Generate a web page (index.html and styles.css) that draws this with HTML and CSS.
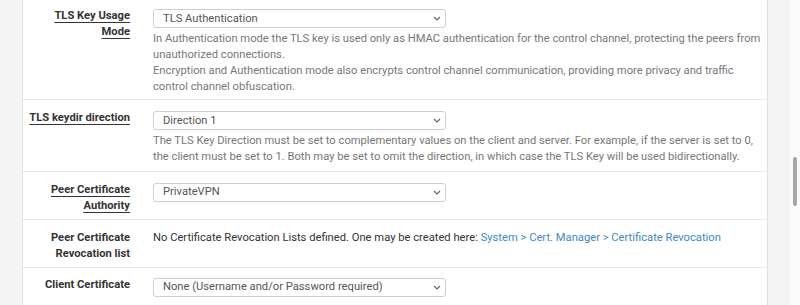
FILE: index.html
```html
<!DOCTYPE html>
<html>
<head>
<meta charset="utf-8">
<link rel="stylesheet" href="styles.css">
</head>
<body>
<div class="page">
  <div class="panel">
    <div class="row r1">
      <div class="label"><span class="req">TLS Key Usage</span><br><span class="req">Mode</span></div>
      <div class="field">
        <div class="select"><span>TLS Authentication</span><svg class="chev" width="8" height="5" viewBox="0 0 8 5"><path d="M1 1 L4 4 L7 1" fill="none" stroke="#666" stroke-width="1.2"/></svg></div>
        <div class="help">In Authentication mode the TLS key is used only as HMAC authentication for the control channel, protecting the peers from unauthorized connections.<br>Encryption and Authentication mode also encrypts control channel communication, providing more privacy and traffic control channel obfuscation.</div>
      </div>
    </div>
    <div class="row r2">
      <div class="label"><span class="req">TLS keydir direction</span></div>
      <div class="field">
        <div class="select"><span>Direction 1</span><svg class="chev" width="8" height="5" viewBox="0 0 8 5"><path d="M1 1 L4 4 L7 1" fill="none" stroke="#666" stroke-width="1.2"/></svg></div>
        <div class="help">The TLS Key Direction must be set to complementary values on the client and server. For example, if the server is set to 0, the client must be set to 1. Both may be set to omit the direction, in which case the TLS Key will be used bidirectionally.</div>
      </div>
    </div>
    <div class="row r3">
      <div class="label"><span class="req">Peer Certificate</span><br><span class="req">Authority</span></div>
      <div class="field">
        <div class="select"><span>PrivateVPN</span><svg class="chev" width="8" height="5" viewBox="0 0 8 5"><path d="M1 1 L4 4 L7 1" fill="none" stroke="#666" stroke-width="1.2"/></svg></div>
      </div>
    </div>
    <div class="row r4">
      <div class="label plain">Peer Certificate<br>Revocation list</div>
      <div class="field">
        <div class="text">No Certificate Revocation Lists defined. One may be created here: <a href="#">System &gt; Cert. Manager &gt; Certificate Revocation</a></div>
      </div>
    </div>
    <div class="row r5">
      <div class="label">Client Certificate</div>
      <div class="field">
        <div class="select"><span>None (Username and/or Password required)</span><svg class="chev" width="8" height="5" viewBox="0 0 8 5"><path d="M1 1 L4 4 L7 1" fill="none" stroke="#666" stroke-width="1.2"/></svg></div>
      </div>
    </div>
  </div>
</div>
<div class="scrollbar"><div class="thumb"></div></div>
</body>
</html>
```
FILE: styles.css
```css
html, body {
  margin: 0;
  padding: 0;
  background: #f4f4f4;
  font-family: Roboto, "Liberation Sans", sans-serif;
  font-size: 11.2px;
  line-height: 16px;
  color: #333;
  overflow: hidden;
  height: 305px;
}
.page {
  padding-left: 22px;
  width: 746px;
}
.panel {
  background: #fff;
  border-left: 1px solid #e0e0e0;
  border-right: 1px solid #e0e0e0;
  border-bottom: 1px solid #e3e3e3;
  margin-top: -3px;
}
.row {
  display: flex;
  border-bottom: 1px solid #e6e6e6;
}
.r1 { padding: 12px 0 3.8px; }
.r2 { padding: 11px 0 5px; }
.r3 { padding: 11px 0 5px; }
.r4 { padding: 10px 0 5px; }
.r5 { padding: 10px 0 8px; border-bottom: none; }
.label {
  width: 107px;
  flex: none;
  text-align: right;
  font-weight: bold;
  white-space: nowrap;
  margin-top: -1px;
  color: #333;
}
.label.plain { margin-top: 0; }
.req {
  text-decoration: underline;
  text-underline-offset: 3px;
  text-decoration-thickness: 1px;
}
.field {
  margin-left: 23px;
  width: 611px;
}
.select {
  width: 293px;
  height: 19px;
  box-sizing: border-box;
  border: 1px solid #cfcfcf;
  border-radius: 3px;
  display: flex;
  align-items: center;
  justify-content: space-between;
  padding: 0 4px 0 9px;
  color: #555;
}
.chev { display: block; }
.help {
  color: #777;
  margin-top: 2.5px;
  line-height: 16.3px;
}
.text {
  color: #333;
}
.text a { color: #4189c7; text-decoration: none; }
.scrollbar {
  position: absolute;
  top: 0;
  right: 0;
  width: 10px;
  height: 305px;
  background: #fafafa;
}
.thumb {
  position: absolute;
  left: 3px;
  top: 157px;
  width: 4px;
  height: 49px;
  border-radius: 2px;
  background: #a6a6a6;
}
```
